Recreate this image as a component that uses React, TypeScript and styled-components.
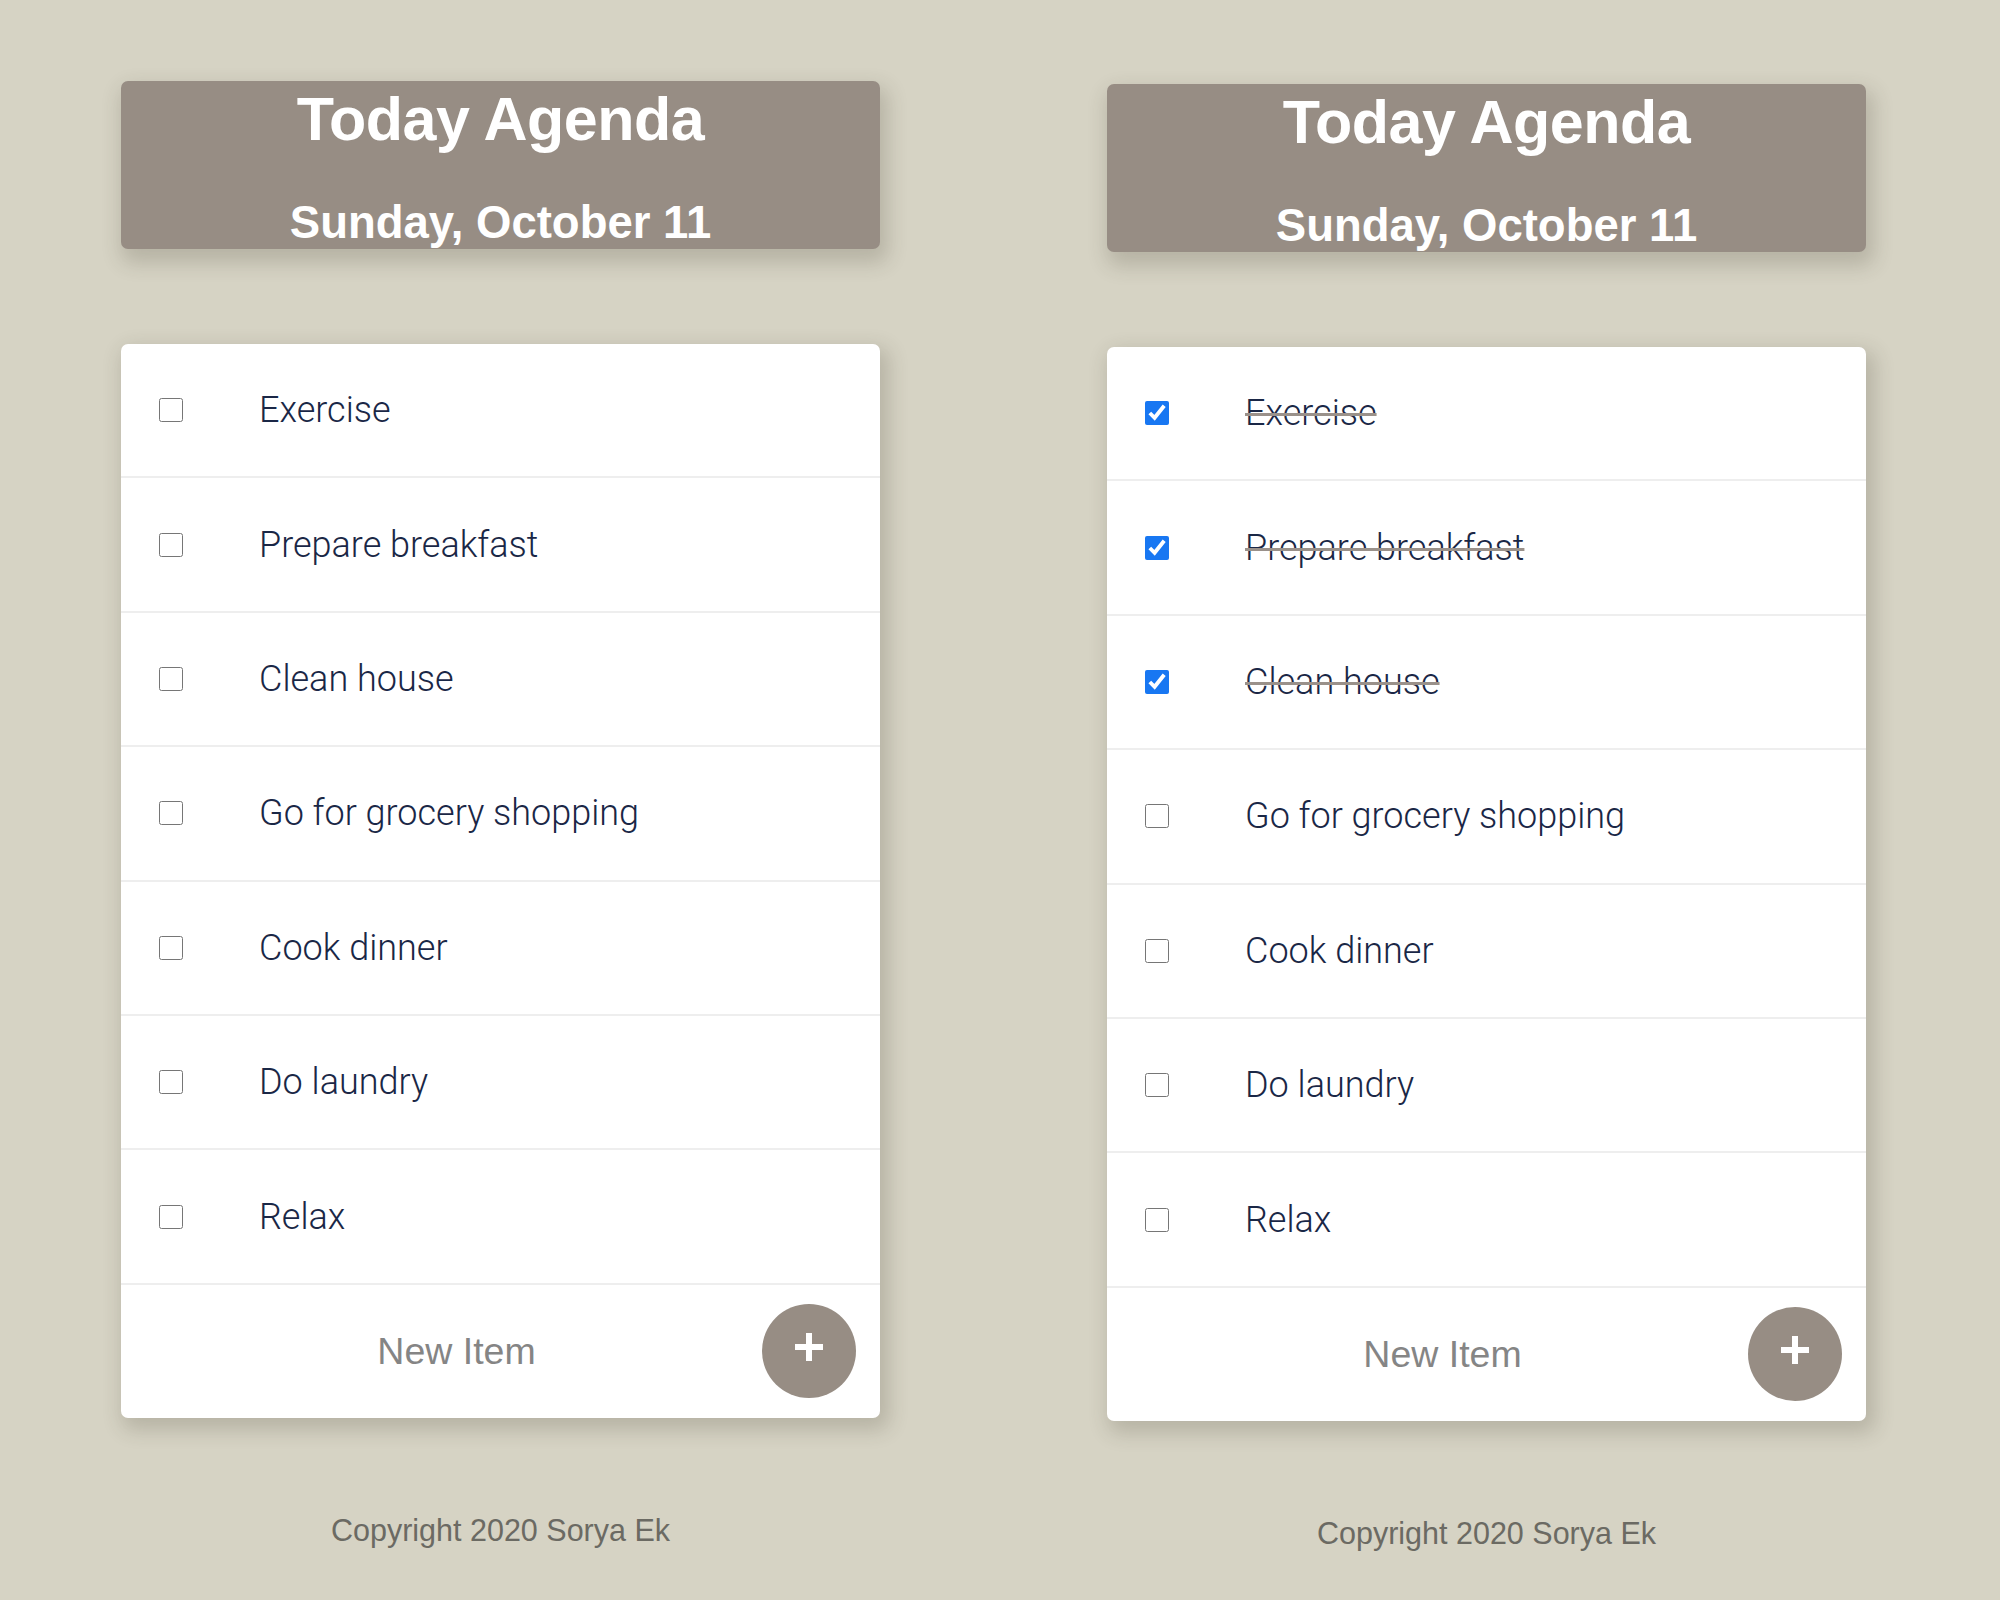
import { FC } from "react";
import styled, { createGlobalStyle } from "styled-components";

type Task = {
  label: string;
  done: boolean;
};

const labels = [
  "Exercise",
  "Prepare breakfast",
  "Clean house",
  "Go for grocery shopping",
  "Cook dinner",
  "Do laundry",
  "Relax",
];

const freshList: Task[] = labels.map((label) => ({ label, done: false }));
const progressList: Task[] = labels.map((label, i) => ({ label, done: i < 3 }));

type AgendaProps = {
  tasks: Task[];
  shift?: number;
};

const PlusIcon: FC = () => (
  <svg width="30" height="30" viewBox="0 0 30 30">
    <rect x="12" y="1" width="6" height="28" fill="#fff" />
    <rect x="1" y="12" width="28" height="6" fill="#fff" />
  </svg>
);

const Agenda: FC<AgendaProps> = ({ tasks, shift = 0 }) => {
  return (
    <Column $shift={shift}>
      <Heading>
        <Title>Today Agenda</Title>
        <DateLine>Sunday, October 11</DateLine>
      </Heading>
      <Card>
        {tasks.map((task) => (
          <Row key={task.label}>
            <Check type="checkbox" checked={task.done} readOnly />
            <Label $done={task.done}>{task.label}</Label>
          </Row>
        ))}
        <Footer>
          <NewItem type="text" placeholder="New Item" />
          <AddButton type="button" aria-label="Add item">
            <PlusIcon />
          </AddButton>
        </Footer>
      </Card>
      <Copyright>Copyright 2020 Sorya Ek</Copyright>
    </Column>
  );
};

const App: FC = () => {
  return (
    <>
      <GlobalStyle />
      <Page>
        <Agenda tasks={freshList} />
        <Agenda tasks={progressList} shift={3} />
      </Page>
    </>
  );
};

export default App;

const GlobalStyle = createGlobalStyle`
  html, body {
    margin: 0;
    padding: 0;
    background: #d6d3c4;
  }
  body {
    font-family: "Liberation Sans", Arial, sans-serif;
    min-height: 1600px;
  }
`;

const Page = styled.div`
  display: grid;
  grid-template-columns: 759px 759px;
  column-gap: 227px;
  padding: 81px 0 0 121px;
  align-items: start;
`;

const Column = styled.div<{ $shift: number }>`
  display: flex;
  flex-direction: column;
  padding-top: ${(p) => p.$shift}px;
`;

const Heading = styled.header`
  background: #978d84;
  border-radius: 7px;
  height: 168px;
  box-sizing: border-box;
  padding-top: 8px;
  text-align: center;
  color: #fff;
  box-shadow: 4px 10px 20px 4px rgba(60, 55, 40, 0.2);
`;

const Title = styled.h1`
  margin: 0;
  font-size: 61px;
  line-height: 60px;
  font-weight: 700;
  letter-spacing: -0.5px;
`;

const DateLine = styled.h2`
  margin: 51px 0 0;
  font-size: 45.5px;
  line-height: 45px;
  font-weight: 700;
`;

const Card = styled.div`
  margin-top: 95px;
  background: #fff;
  border-radius: 7px;
  overflow: hidden;
  box-shadow: 5px 8px 20px 4px rgba(60, 55, 40, 0.2);
`;

const Row = styled.div`
  display: flex;
  align-items: center;
  height: 134.4px;
  box-sizing: border-box;
  border-bottom: 2px solid #eeeeee;
  padding-left: 38px;
`;

const Check = styled.input`
  width: 24px;
  height: 24px;
  margin: 0 76px 0 0;
  accent-color: #1877f2;
  flex-shrink: 0;
`;

const Label = styled.span<{ $done: boolean }>`
  font-family: "Helvetica Neue", Roboto, "Liberation Sans", sans-serif;
  font-weight: 300;
  font-size: 36px;
  color: #1a2746;
  text-decoration: ${(p) => (p.$done ? "line-through" : "none")};
  text-decoration-color: #9a918a;
  text-decoration-thickness: 3px;
`;

const Footer = styled.div`
  display: flex;
  align-items: center;
  height: 133px;
  padding: 0 24px 0 30px;
`;

const NewItem = styled.input`
  flex: 1;
  min-width: 0;
  border: none;
  outline: none;
  background: transparent;
  text-align: center;
  font-family: "Liberation Sans", Arial, sans-serif;
  font-size: 37.5px;
  color: #333;

  &::placeholder {
    color: #858585;
  }
`;

const AddButton = styled.button`
  width: 94px;
  height: 94px;
  border-radius: 50%;
  border: none;
  background: #978d84;
  display: flex;
  align-items: center;
  justify-content: center;
  padding: 0 0 8px;
  flex-shrink: 0;
  cursor: pointer;
`;

const Copyright = styled.p`
  margin: 95px 0 0;
  text-align: center;
  font-size: 30.5px;
  line-height: 35px;
  color: #6b6a63;
`;
